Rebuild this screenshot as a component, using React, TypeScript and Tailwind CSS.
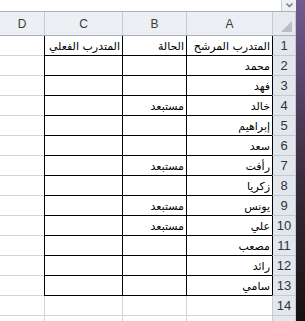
import React from 'react';

const rows: [string, string, string][] = [
  ['المتدرب المرشح', 'الحالة', 'المتدرب الفعلي'],
  ['محمد', '', ''],
  ['فهد', '', ''],
  ['خالد', 'مستبعد', ''],
  ['إبراهيم', '', ''],
  ['سعد', '', ''],
  ['رأفت', 'مستبعد', ''],
  ['زكريا', '', ''],
  ['يونس', 'مستبعد', ''],
  ['علي', 'مستبعد', ''],
  ['مصعب', '', ''],
  ['رائد', '', ''],
  ['سامي', '', ''],
  ['', '', ''],
];

const arabic = { fontFamily: '"DejaVu Sans", "Liberation Sans", sans-serif' };
const latin = { fontFamily: '"Liberation Sans", Arial, sans-serif' };

export default function App() {
  return (
    <div className="flex w-[305px] h-[321px] overflow-hidden bg-white">
      <div className="flex flex-col w-[296px]">
        {/* formula bar strip */}
        <div className="flex justify-end h-[12px] border-b border-[#a9b1bb] bg-white">
          <div className="flex items-center justify-center w-[15px] h-full bg-[#eef0f3] border-l border-[#c9ced6]">
            <svg width="7" height="5" viewBox="0 0 7 5">
              <path d="M0.5 0.5 L3.5 3.5 L6.5 0.5" stroke="#6b7280" strokeWidth="1.3" fill="none" />
            </svg>
          </div>
        </div>

        {/* column headers */}
        <div className="flex h-[24px] bg-[#eceff3] border-b border-[#a9b1bb] text-[12px] text-[#3c3c3c]" style={latin}>
          <div className="flex items-center justify-center w-[44px]">D</div>
          <div className="flex items-center justify-center w-[78px] border-l border-[#c4cad3]">C</div>
          <div className="flex items-center justify-center w-[64px] border-l border-[#c4cad3]">B</div>
          <div className="flex items-center justify-center w-[86px] border-l border-[#c4cad3]">A</div>
          <div className="relative w-[24px] border-l border-r border-[#c4cad3] bg-[#e6e9ee]">
            <svg className="absolute right-[3px] bottom-[3px]" width="11" height="11" viewBox="0 0 11 11">
              <path d="M11 0 L11 11 L0 11 Z" fill="#b9bec6" />
            </svg>
          </div>
        </div>

        {/* rows */}
        {rows.map((r, i) => {
          const inTable = i < 13;
          const line = inTable ? 'border-black' : 'border-[#d4d4d4]';
          return (
            <div key={i} className="flex h-[20px]">
              <div className="w-[44px] border-b border-[#d4d4d4]" />
              <div
                className={`flex items-end pb-[1px] pr-[2px] w-[78px] border-l border-b ${line} text-[11px] leading-[14px] text-black`}
                style={arabic}
                dir="rtl"
              >
                {r[2]}
              </div>
              <div
                className={`flex items-end pb-[1px] pr-[2px] w-[64px] border-l border-b ${line} text-[11px] leading-[14px] text-black`}
                style={arabic}
                dir="rtl"
              >
                {r[1]}
              </div>
              <div
                className={`flex items-end pb-[1px] pr-[2px] w-[86px] border-l border-b ${line} text-[11px] leading-[14px] text-black`}
                style={arabic}
                dir="rtl"
              >
                {r[0]}
              </div>
              <div
                className={`flex items-center justify-center w-[24px] border-l border-r border-b border-r-[#c4cad3] border-b-[#c4cad3] ${inTable ? 'border-l-black' : 'border-l-[#c4cad3]'} bg-[#e2e7ee] text-[13px] text-[#333]`}
                style={latin}
              >
                {i + 1}
              </div>
            </div>
          );
        })}
        <div className="flex flex-1">
          <div className="w-[44px]" />
          <div className="w-[78px] border-l border-[#d4d4d4]" />
          <div className="w-[64px] border-l border-[#d4d4d4]" />
          <div className="w-[86px] border-l border-[#d4d4d4]" />
          <div className="w-[24px] border-l border-r border-[#c4cad3] bg-[#e2e7ee]" />
        </div>
      </div>
      <div className="w-[9px] bg-gradient-to-b from-[#6f5d92] via-[#3e3143] to-[#15110f]" />
    </div>
  );
}
